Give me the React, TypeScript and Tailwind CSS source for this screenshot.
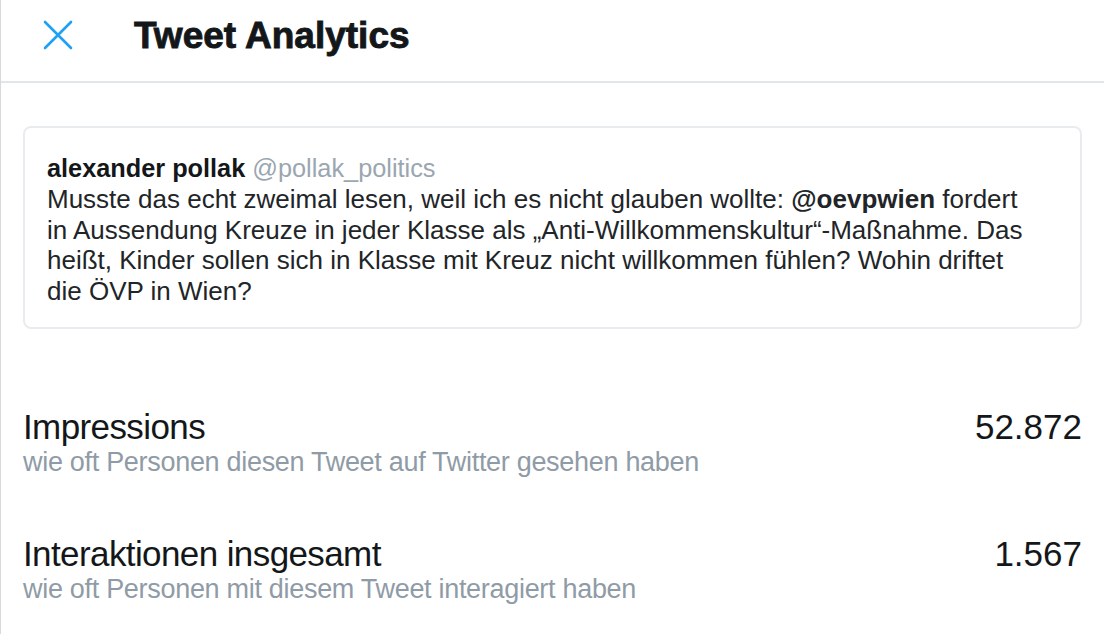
const font = "font-['Liberation_Sans',Arial,sans-serif]";

type Metric = { label: string; hint: string; value: string };

const METRICS: Metric[] = [
  {
    label: "Impressions",
    hint: "wie oft Personen diesen Tweet auf Twitter gesehen haben",
    value: "52.872",
  },
  {
    label: "Interaktionen insgesamt",
    hint: "wie oft Personen mit diesem Tweet interagiert haben",
    value: "1.567",
  },
];

function CloseIcon() {
  return (
    <svg width="30" height="30" viewBox="0 0 30 30" fill="none" aria-hidden className="mb-[11px]">
      <path d="M2 2 L28 28 M28 2 L2 28" stroke="#1da1f2" strokeWidth="2.6" strokeLinecap="round" />
    </svg>
  );
}

export default function App() {
  return (
    <div className={`${font} h-[634px] w-[1104px] overflow-hidden bg-white border-l border-[#d9d9d9] text-[#14171a]`}>
      <header className="flex h-[83px] items-center border-b-2 border-[#e1e6ea] pl-[42px]">
        <CloseIcon />
        <h1 className="ml-[61px] pb-[9px] text-[37px] font-bold tracking-[0px] [-webkit-text-stroke:0.9px_#14171a]">
          Tweet Analytics
        </h1>
      </header>

      <div className="px-[22px] pt-[43px]">
        <div className="rounded-[8px] border-2 border-[#e9ecef] pl-[22px] pr-[16px] pt-[24px] pb-[21px]">
          <p className="text-[25.3px] leading-[32px]">
            <span className="font-bold text-[#14171a]">alexander pollak</span>{" "}
            <span className="text-[#9aa6b0]">@pollak_politics</span>
          </p>
          <p className="whitespace-nowrap text-[26px] leading-[30.5px] text-[#222528]">
            Musste das echt zweimal lesen, weil ich es nicht glauben wollte: <span className="font-bold">@oevpwien</span> fordert
            <br />
            in Aussendung Kreuze in jeder Klasse als „Anti-Willkommenskultur“-Maßnahme. Das
            <br />
            heißt, Kinder sollen sich in Klasse mit Kreuz nicht willkommen fühlen? Wohin driftet
            <br />
            die ÖVP in Wien?
          </p>
        </div>

        <div className="mt-[79px] flex flex-col gap-[57px]">
          {METRICS.map((m) => (
            <div key={m.label} className="flex items-start justify-between">
              <div>
                <div className="text-[35px] leading-[38px] tracking-[-0.6px] text-[#14171a]">{m.label}</div>
                <div className="text-[27px] leading-[32px] tracking-[-0.3px] text-[#8f9ba6]">{m.hint}</div>
              </div>
              <div className="text-[35px] leading-[38px] text-[#14171a]">{m.value}</div>
            </div>
          ))}
        </div>
      </div>
    </div>
  );
}
